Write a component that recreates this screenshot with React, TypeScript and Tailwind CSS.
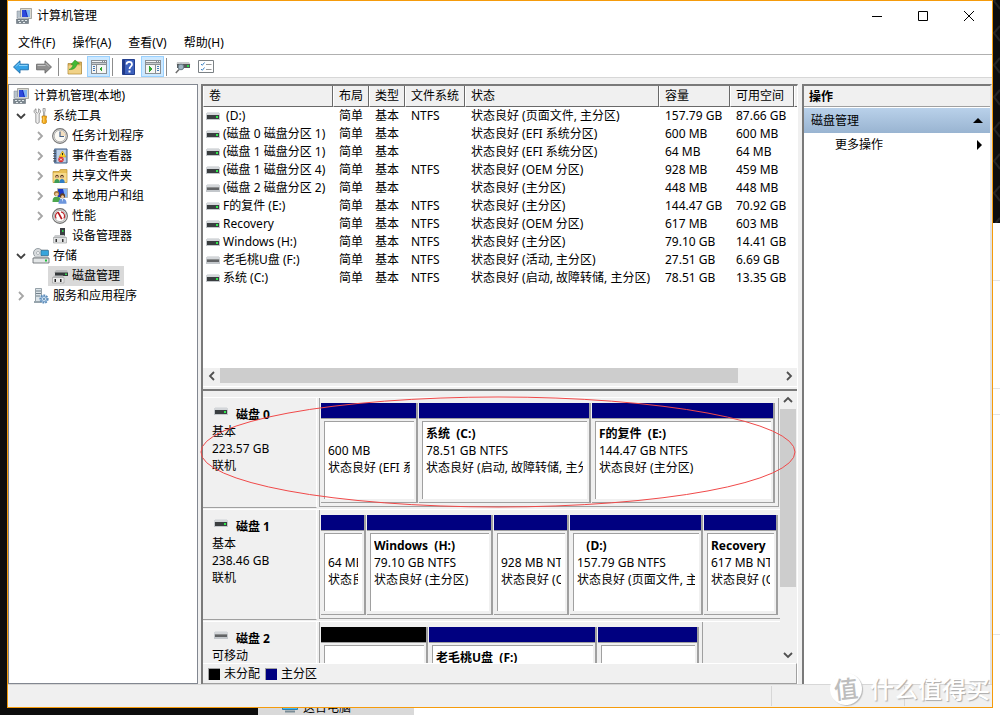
import type { ReactNode } from 'react';

interface Volume {
  name: string;
  removable?: boolean;
  fs: string;
  status: string;
  capacity: string;
  free: string;
}

interface Partition {
  width: string;
  name?: string;
  size?: string;
  status?: string;
  unallocated?: boolean;
}

interface Disk {
  name: string;
  kind: string;
  size?: string;
  state?: string;
  removable?: boolean;
  framed: boolean;
  partitions: Partition[];
}

const volumes: Volume[] = [
  { name: ' (D:)', fs: 'NTFS', status: '状态良好 (页面文件, 主分区)', capacity: '157.79 GB', free: '87.66 GB' },
  { name: '(磁盘 0 磁盘分区 1)', fs: '', status: '状态良好 (EFI 系统分区)', capacity: '600 MB', free: '600 MB' },
  { name: '(磁盘 1 磁盘分区 1)', fs: '', status: '状态良好 (EFI 系统分区)', capacity: '64 MB', free: '64 MB' },
  { name: '(磁盘 1 磁盘分区 4)', fs: 'NTFS', status: '状态良好 (OEM 分区)', capacity: '928 MB', free: '459 MB' },
  { name: '(磁盘 2 磁盘分区 2)', removable: true, fs: '', status: '状态良好 (主分区)', capacity: '448 MB', free: '448 MB' },
  { name: 'F的复件 (E:)', fs: 'NTFS', status: '状态良好 (主分区)', capacity: '144.47 GB', free: '70.92 GB' },
  { name: 'Recovery', fs: 'NTFS', status: '状态良好 (OEM 分区)', capacity: '617 MB', free: '603 MB' },
  { name: 'Windows (H:)', fs: 'NTFS', status: '状态良好 (主分区)', capacity: '79.10 GB', free: '14.41 GB' },
  { name: '老毛桃U盘 (F:)', removable: true, fs: 'NTFS', status: '状态良好 (活动, 主分区)', capacity: '27.51 GB', free: '6.69 GB' },
  { name: '系统 (C:)', fs: 'NTFS', status: '状态良好 (启动, 故障转储, 主分区)', capacity: '78.51 GB', free: '13.35 GB' },
];

const disks: Disk[] = [
  {
    name: '磁盘 0',
    kind: '基本',
    size: '223.57 GB',
    state: '联机',
    framed: true,
    partitions: [
      { width: 'w-[97px]', size: '600 MB', status: '状态良好 (EFI 系统分区)' },
      { width: 'w-[172px]', name: '系统  (C:)', size: '78.51 GB NTFS', status: '状态良好 (启动, 故障转储, 主分区)' },
      { width: 'w-[183px]', name: 'F的复件  (E:)', size: '144.47 GB NTFS', status: '状态良好 (主分区)' },
    ],
  },
  {
    name: '磁盘 1',
    kind: '基本',
    size: '238.46 GB',
    state: '联机',
    framed: false,
    partitions: [
      { width: 'w-[45px]', size: '64 MB', status: '状态良好 (EFI 系统分区)' },
      { width: 'w-[126px]', name: 'Windows  (H:)', size: '79.10 GB NTFS', status: '状态良好 (主分区)' },
      { width: 'w-[75px]', size: '928 MB NTFS', status: '状态良好 (OEM 分区)' },
      { width: 'w-[133px]', name: '   (D:)', size: '157.79 GB NTFS', status: '状态良好 (页面文件, 主分区)' },
      { width: 'w-[74px]', name: 'Recovery', size: '617 MB NTFS', status: '状态良好 (OEM 分区)' },
    ],
  },
  {
    name: '磁盘 2',
    kind: '可移动',
    removable: true,
    framed: true,
    partitions: [
      { width: 'w-[107px]', unallocated: true },
      { width: 'w-[168px]', name: '老毛桃U盘  (F:)' },
      { width: 'w-[101px]' },
    ],
  },
];

const columns = [
  { label: '卷', width: 'w-[130px]' },
  { label: '布局', width: 'w-9' },
  { label: '类型', width: 'w-9' },
  { label: '文件系统', width: 'w-[60px]' },
  { label: '状态', width: 'w-[194px]' },
  { label: '容量', width: 'w-[71px]' },
  { label: '可用空间', width: 'w-16' },
  { label: '', width: '' },
];

function ComputerIcon() {
  return (
    <svg width="16" height="16" viewBox="0 0 16 16">
      <path d="M4.500.5h11v10h-11z" fill="#d8d8d0" stroke="#8b8b85" strokeWidth=".7" />
      <path d="M6 2h8v7H6z" fill="#1525b8" />
      <path d="M10 2h4v7h-2z" fill="#7fb4f4" />
      <path d="M6 2h3l2 7H6z" fill="#2c49dc" />
      <path d="M1 3h3.500v7H1z" fill="#b7c2cb" stroke="#7c8790" strokeWidth=".5" />
      <path d="M2 9h10v2H2z" fill="#c9ced2" />
      <path d="M.5 11h12v4.500H.5z" fill="#7b868e" stroke="#59636c" strokeWidth=".5" />
      <path d="M2 12h2v1H2zM5.500 12h2v1h-2zM9 12h2v1H9zM3 14h2v1H3zM7 14h2v1H7z" fill="#e2e8eb" />
    </svg>
  );
}

function ToolsIcon() {
  return (
    <svg width="16" height="16" viewBox="0 0 16 16">
      <path d="M3 .8v3.400l1.300.9 1.300-.9V.8c1.600.7 2.200 2.100 1.800 3.500L6.200 6v8.500l-1.700 1-1.700-1V6L1.200 4.300C.8 2.900 1.400 1.500 3 .8z" fill="#ededed" stroke="#777" strokeWidth=".7" />
      <path d="M10 .5h2.200v2.500l-.5 1v4h-1.200v-4l-.5-1z" fill="#e5e5e5" stroke="#777" strokeWidth=".6" />
      <path d="M9 8h4.500v2l-.6 1 .6 1.200v2.300l-1 1h-2.500l-1-1v-2.300l.6-1.200-.6-1z" fill="#f0a514" stroke="#bb7706" strokeWidth=".6" />
      <path d="M10.300 8.500h1v6h-1z" fill="#ffdb75" />
    </svg>
  );
}

function ClockIcon() {
  return (
    <svg width="16" height="16" viewBox="0 0 16 16">
      <circle cx="8" cy="8" r="7.400" fill="#e4e4e2" stroke="#777" strokeWidth="1.100" />
      <circle cx="8" cy="8" r="5.800" fill="#fbf9f3" stroke="#a9a9a9" strokeWidth=".8" />
      <path d="M8 2.500a5.500 5.500 0 0 1 5.500 5.500H8z" fill="#f2dec0" />
      <path d="M8 3.500V8.500h4" fill="none" stroke="#47638a" strokeWidth="1.200" />
    </svg>
  );
}

function EventIcon() {
  return (
    <svg width="16" height="16" viewBox="0 0 16 16">
      <path d="M2.500 1h12.500v14H2.500z" fill="#a9c0dc" stroke="#3f5c84" />
      <path d="M5 3h8.500M5 5h8.500M5 7h8.500M5 9h8.500M5 11h8.500M5 13h8.500" stroke="#d9e6f4" strokeWidth=".9" />
      <path d="M2 1h2.500v14H2z" fill="#5d7ba2" />
      <path d="M1 3h3M1 5.500h3M1 8h3M1 10.500h3M1 13h3" stroke="#444" strokeWidth=".8" />
      <path d="M10.500 3l3.500 6H7z" fill="#ffd52e" stroke="#b7880a" strokeWidth=".5" />
      <path d="M10.500 5v2.200" stroke="#222" />
      <circle cx="9" cy="11.500" r="2.700" fill="#db2f2f" />
      <path d="M8 10.500l2 2M10 10.500l-2 2" stroke="#fff" strokeWidth=".9" />
    </svg>
  );
}

function SharedFolderIcon() {
  return (
    <svg width="16" height="16" viewBox="0 0 16 16">
      <path d="M1 3.500h6l1.500-2H15v13H1z" fill="#e8bf55" stroke="#b98f2c" strokeWidth=".7" />
      <path d="M1.500 5h13v9h-13z" fill="#f6da8c" />
      <circle cx="5" cy="8.500" r="1.700" fill="#634026" />
      <circle cx="5" cy="9" r="1" fill="#efc79c" />
      <path d="M2.300 15c0-3 1-4 2.700-4s2.700 1 2.700 4z" fill="#3d9b57" />
      <circle cx="10" cy="8.500" r="1.700" fill="#51341e" />
      <circle cx="10" cy="9" r="1" fill="#efc79c" />
      <path d="M7.500 15c0-3 .8-4 2.500-4s2.700 1 2.700 4z" fill="#307dc5" />
    </svg>
  );
}

function UsersIcon() {
  return (
    <svg width="16" height="16" viewBox="0 0 16 16">
      <path d="M5.500.5h10v9h-10z" fill="#1d39c4" stroke="#b5b5b0" />
      <path d="M11 1h4v8h-2z" fill="#82b2f0" />
      <circle cx="4.500" cy="5.500" r="2.600" fill="#a77a3c" />
      <circle cx="4.700" cy="6.300" r="1.600" fill="#efc79c" />
      <path d="M.5 14c0-4 1.300-5.300 4-5.300S9 10 9 14z" fill="#4ca64d" />
      <circle cx="10.500" cy="7.800" r="2.500" fill="#63401f" />
      <circle cx="10.500" cy="8.700" r="1.500" fill="#efc79c" />
      <path d="M6.500 15.800c0-3.500 1-5 4-5s4 1.500 4 5z" fill="#6d96dd" />
      <path d="M10 11l.5 3 .5-3z" fill="#fff" />
    </svg>
  );
}

function PerformanceIcon() {
  return (
    <svg width="16" height="16" viewBox="0 0 16 16">
      <circle cx="8" cy="8" r="7.400" fill="#e6e6e4" stroke="#707070" strokeWidth="1.100" />
      <circle cx="8" cy="8" r="5.600" fill="#fff" stroke="#9a9a9a" strokeWidth=".7" />
      <path d="M4.200 10.500A4.300 4.300 0 0 1 6 4.200M9 3.800a4.300 4.300 0 0 1 2.800 6.700" fill="none" stroke="#c0282d" strokeWidth="1.200" />
      <path d="M6 4.200l3.800 7" stroke="#b5161c" strokeWidth="1.700" />
    </svg>
  );
}

function DeviceIcon() {
  return (
    <svg width="16" height="16" viewBox="0 0 16 16">
      <path d="M8 0h5v8H8z" fill="#3c3f43" />
      <path d="M10 2h1.500v2H10z" fill="#2bd44d" />
      <path d="M3 7h9l3 3H1z" fill="#c8cacc" />
      <path d="M1.500 9.500h13V15h-13z" fill="#e2e3e4" stroke="#a1a3a5" strokeWidth=".7" />
      <path d="M3.500 11h1.500v3H3.500zM10 11h1.500v3H10z" fill="#333" />
    </svg>
  );
}

function StorageIcon() {
  return (
    <svg className="shrink-0" width="18" height="16" viewBox="0 0 18 16">
      <path d="M3 1h13v7H3z" fill="#d0d5d8" />
      <circle cx="6" cy="5" r="4.500" fill="#d9dcde" stroke="#7f898f" strokeWidth=".8" />
      <circle cx="6" cy="5" r="1.500" fill="#fff" stroke="#8a9398" strokeWidth=".6" />
      <path d="M9 2.500h7.500v5H9z" fill="#37a5dc" stroke="#276f97" strokeWidth=".7" />
      <path d="M3 8h13l1 2.500H1z" fill="#c4c8ca" />
      <path d="M1 10h16v5H1z" fill="#e3e6e7" stroke="#60666a" strokeWidth=".8" />
      <path d="M13 11.500h2v2h-2z" fill="#20bd3b" />
    </svg>
  );
}

function DiskManagementIcon() {
  return (
    <svg width="16" height="16" viewBox="0 0 16 16">
      <path d="M4 2h11l1 3H2z" fill="#b9bbbc" />
      <path d="M3 4.500h13v3.500H3z" fill="#34383a" />
      <path d="M13 5.500h2v1.500h-2z" fill="#38d853" />
      <path d="M2 7.500h9l1 2.500H0z" fill="#b8babb" />
      <path d="M.5 9.500h11.500V15H.5z" fill="#ececec" stroke="#a3a3a3" strokeWidth=".7" />
      <path d="M2.500 11h1.500v3H2.500zM8 11h1.500v3H8z" fill="#222" />
    </svg>
  );
}

function ServicesIcon() {
  return (
    <svg width="16" height="16" viewBox="0 0 16 16">
      <path d="M2.500.5h6v14h-6z" fill="#dce4e9" stroke="#7d8b94" strokeWidth=".8" />
      <path d="M3 3h5M3 5.500h5M3 8h4" stroke="#71808a" />
      <path d="M1 13h7v2H1z" fill="#98a5ad" />
      <circle cx="11" cy="11" r="3.800" fill="#b5d2ed" stroke="#5d8cb9" strokeWidth="1.600" strokeDasharray="1.800 1" />
      <circle cx="11" cy="11" r="2.500" fill="#d8e9f8" stroke="#5d8cb9" strokeWidth=".8" />
      <circle cx="11" cy="11" r=".9" fill="#47769f" />
    </svg>
  );
}

function DriveIcon({ removable = false }: { removable?: boolean }) {
  return (
    <svg className="shrink-0" width="14" height="8" viewBox="0 0 14 8" shapeRendering="crispEdges">
      <path d="M1 0h12v1H1z" fill="#dfe1e3" />
      <path d="M0 1h14v2H0z" fill="#d3d6d9" />
      <path d="M0 3h14v5H0z" fill="#c3c7cb" />
      {removable ? (
        <>
          <path d="M1 3h12v1H1z" fill="#8d8f90" />
          <path d="M1 4h12v2H1z" fill="#626466" />
        </>
      ) : (
        <>
          <path d="M1 3h12v4H1z" fill="#3a3e40" />
          <path d="M10 4h2v2h-2z" fill="#2fe84c" />
        </>
      )}
    </svg>
  );
}

function ArrowIcon({ forward = false }: { forward?: boolean }) {
  return (
    <svg width="16" height="14" viewBox="0 0 16 14">
      {forward ? (
        <path d="M15.500 7L9 .8v3.400H.6v5.600H9v3.400z" fill="#8f8f8f" stroke="#666" strokeWidth=".9" />
      ) : (
        <path d="M.5 7L7 .8v3.400h8.400v5.600H7v3.400z" fill="#35a2e6" stroke="#1c6ca8" strokeWidth=".9" />
      )}
      {forward ? (
        <path d="M1.500 5.500h8M9.500 3l3.500 3.500" stroke="#c5c5c5" />
      ) : (
        <path d="M6 5.500h8.500M6.500 3L3 6.500" stroke="#8ad3fb" />
      )}
    </svg>
  );
}

function FolderUpIcon() {
  return (
    <svg width="16" height="16" viewBox="0 0 16 16">
      <path d="M1 4.500h6l1.500-1.500H14.500v12H1z" fill="#dcb35a" stroke="#a8812e" strokeWidth=".7" />
      <path d="M1.500 6.500h12.500V14.500H1.500z" fill="#f0d288" />
      <path d="M2 10.500c2.500-1 3.800-2.500 4-5H4L8 1l4.500 3.800-2.700.4C9.500 8.500 6.500 11 2 10.500z" fill="#42ba36" stroke="#23861c" strokeWidth=".5" />
    </svg>
  );
}

function PaneIcon({ right = false }: { right?: boolean }) {
  return (
    <svg width="16" height="14" viewBox="0 0 16 14" shapeRendering="crispEdges">
      <path d="M0 0h16v14H0z" fill="#8a8f94" />
      <path d="M1 1h10v1H1zM12 1h1v1h-1zM14 1h1v1h-1z" fill="#f4f4f4" />
      <path d="M1 3h14v1H1z" fill="#c5c9cc" />
      <path d={right ? 'M1 5h9v8H1zM11 5h4v8h-4z' : 'M1 5h4v8H1zM6 5h9v8H6z'} fill="#f6f6f4" />
      <path d={right ? 'M12 6h2v1h-2zM12 8h2v1h-2zM12 10h2v1h-2z' : 'M2 6h2v1H2zM2 8h2v1H2zM2 10h2v1H2z'} fill="#4077b8" />
      <path d={right ? 'M4 6l4 3-4 3z' : 'M11 6L8 9l3 3z'} fill="#31a52d" />
    </svg>
  );
}

function HelpIcon() {
  return (
    <svg width="13" height="16" viewBox="0 0 13 16">
      <path d="M.5.5h12v15H.5z" fill="#3c60bc" stroke="#233f8e" />
      <path d="M1 1h2v14H1z" fill="#203987" />
      <path d="M4.500 5.500C4.500 2 10 2 10 5.500c0 2-2.500 2-2.500 4.500" fill="none" stroke="#fff" strokeWidth="1.700" />
      <path d="M6.500 11.500h2v2h-2z" fill="#fff" />
    </svg>
  );
}

function RescanIcon() {
  return (
    <svg width="16" height="14" viewBox="0 0 16 14">
      <path d="M2 2h12l1.500 2.500h-14z" fill="#c7c9ca" />
      <path d="M2 4h13v4H2z" fill="#55595b" />
      <path d="M12 5h2v2h-2z" fill="#2bd84a" />
      <circle cx="6" cy="7" r="2.800" fill="#9fb4c2" stroke="#697c88" />
      <path d="M4 9.500L.8 13" stroke="#6e6e6e" strokeWidth="1.500" />
    </svg>
  );
}

function ChecklistIcon() {
  return (
    <svg width="16" height="13" viewBox="0 0 16 13">
      <path d="M.5.5h15v12H.5z" fill="#fff" stroke="#7b8185" />
      <path d="M3 4l1.300 1.300L6.500 2.500M3 9l1.300 1.300L6.500 7.500" fill="none" stroke="#3c83c7" />
      <path d="M8 4.500h5.500M8 9.500h5.500" stroke="#999" />
    </svg>
  );
}

function Chevron({ dir, className = 'text-[#505050]' }: { dir: 'up' | 'down' | 'left' | 'right'; className?: string }) {
  const paths = {
    up: 'M1 7l4-4 4 4',
    down: 'M1 3l4 4 4-4',
    left: 'M7 1L3 5l4 4',
    right: 'M3 1l4 4-4 4',
  };
  return (
    <svg className={`shrink-0 ${className}`} width="10" height="10" viewBox="0 0 10 10">
      <path d={paths[dir]} fill="none" stroke="currentColor" strokeWidth="1.800" />
    </svg>
  );
}

interface TreeItemProps {
  label: string;
  icon: ReactNode;
  indent: string;
  state?: 'open' | 'closed' | 'leaf';
  selected?: boolean;
  children?: ReactNode;
}

function TreeItem({ label, icon, indent, state = 'leaf', selected, children }: TreeItemProps) {
  return (
    <li>
      <button className={`flex h-5 w-full items-center ${indent}`}>
        <span className="flex w-4 shrink-0 justify-center">
          {state === 'open' && <Chevron dir="down" className="text-[#404040]" />}
          {state === 'closed' && <Chevron dir="right" className="text-[#a6a6a6]" />}
        </span>
        <span className={`flex h-5 items-center gap-1 px-1 ${selected ? 'bg-[#d9d9d9]' : ''}`}>
          <span className="flex w-4 shrink-0 justify-center">{icon}</span>
          <span className="whitespace-nowrap">{label}</span>
        </span>
      </button>
      {children && <ul>{children}</ul>}
    </li>
  );
}

function Tree() {
  return (
    <nav className="w-[190px] shrink-0 border border-[#828790] bg-white pt-px">
      <button className="flex h-5 items-center gap-[5px] pl-1">
        <ComputerIcon />
        计算机管理(本地)
      </button>
      <ul>
        <TreeItem label="系统工具" icon={<ToolsIcon />} indent="pl-1" state="open">
          <TreeItem label="任务计划程序" icon={<ClockIcon />} indent="pl-[23px]" state="closed" />
          <TreeItem label="事件查看器" icon={<EventIcon />} indent="pl-[23px]" state="closed" />
          <TreeItem label="共享文件夹" icon={<SharedFolderIcon />} indent="pl-[23px]" state="closed" />
          <TreeItem label="本地用户和组" icon={<UsersIcon />} indent="pl-[23px]" state="closed" />
          <TreeItem label="性能" icon={<PerformanceIcon />} indent="pl-[23px]" state="closed" />
          <TreeItem label="设备管理器" icon={<DeviceIcon />} indent="pl-[23px]" />
        </TreeItem>
        <TreeItem label="存储" icon={<StorageIcon />} indent="pl-1" state="open">
          <TreeItem label="磁盘管理" icon={<DiskManagementIcon />} indent="pl-[23px]" selected />
        </TreeItem>
        <TreeItem label="服务和应用程序" icon={<ServicesIcon />} indent="pl-1" state="closed" />
      </ul>
    </nav>
  );
}

function VolumeList() {
  return (
    <section className="flex h-[305px] shrink-0 flex-col">
      <div className="min-h-0 flex-1 overflow-hidden bg-white">
        <table className="w-full table-fixed border-separate border-spacing-0 text-left">
          <thead>
            <tr>
              {columns.map((col) => (
                <th
                  key={col.label}
                  className={`h-[21px] border-b border-l border-b-[#696969] border-l-white bg-[#f0f0f0] p-0 font-normal ${col.width}`}
                >
                  <div className="h-5 overflow-hidden border-r border-[#696969] pl-[5px] leading-5 whitespace-nowrap">
                    {col.label}
                  </div>
                </th>
              ))}
            </tr>
          </thead>
          <tbody>
            {volumes.map((v) => (
              <tr key={v.name} className="h-[18px] whitespace-pre">
                <td className="p-0 pl-[3px]">
                  <span className="flex items-center gap-[3px] leading-[18px]">
                    <DriveIcon removable={v.removable} />
                    {v.name}
                  </span>
                </td>
                <td className="p-0 pl-1.5 leading-[18px]">简单</td>
                <td className="p-0 pl-1.5 leading-[18px]">基本</td>
                <td className="p-0 pl-1.5 leading-[18px]">{v.fs}</td>
                <td className="p-0 pl-1.5 leading-[18px]">{v.status}</td>
                <td className="p-0 pl-1.5 leading-[18px]">{v.capacity}</td>
                <td className="p-0 pl-1.5 leading-[18px]">{v.free}</td>
                <td className="p-0" />
              </tr>
            ))}
          </tbody>
        </table>
      </div>
      <div className="flex h-[15px] shrink-0 bg-[#f0f0f0]">
        <button aria-label="向左滚动" className="flex w-[17px] items-center justify-center">
          <Chevron dir="left" />
        </button>
        <div className="flex-1">
          <div className="h-full w-[92.5%] bg-[#cdcdcd]" />
        </div>
        <button aria-label="向右滚动" className="flex w-[17px] items-center justify-center">
          <Chevron dir="right" />
        </button>
      </div>
      <div className="h-2 shrink-0 border-b-2 border-[#7a7a7a] bg-[#f0f0f0] pt-[3px]">
        <div className="h-px bg-white" />
      </div>
    </section>
  );
}

function PartitionCell({ partition }: { partition: Partition }) {
  return (
    <div className={`flex shrink-0 flex-col border-r-2 border-b border-[#a0a0a0] ${partition.width}`}>
      <div className={`h-[15px] shrink-0 ${partition.unallocated ? 'bg-black' : 'bg-[#000080]'}`} />
      <div className="h-px shrink-0 bg-[#a0a0a0]" />
      <div className="mx-[2px] mt-[2px] mb-[3px] ml-[3px] min-h-0 flex-1 border-t border-l border-[#a0a0a0] bg-white pt-[3px] pr-1 pl-[3px]">
        <div className="leading-[17px] whitespace-pre">
          <p className="h-[17px] overflow-hidden font-bold">{partition.name}</p>
          <p className="overflow-hidden">{partition.size}</p>
          <p className="overflow-hidden">{partition.status}</p>
        </div>
      </div>
    </div>
  );
}

function DiskRow({ disk }: { disk: Disk }) {
  return (
    <div className="flex h-28 shrink-0 border-t border-white">
      <div className="mb-px w-[114px] shrink-0 border-r border-b border-r-white border-b-[#a0a0a0] pt-2 pl-[9px] leading-[17px]">
        <div className="flex gap-2 font-bold">
          <span className="pt-px pl-[2px]">
            <DriveIcon removable={disk.removable} />
          </span>
          {disk.name}
        </div>
        <p>{disk.kind}</p>
        <p>{disk.size}</p>
        <p>{disk.state}</p>
      </div>
      <div className="min-w-0 flex-1 pl-[2px]">
        <div
          className={`flex h-[109px] gap-px border-b border-l border-[#a0a0a0] pt-[5px] pb-[3px] pl-px ${
            disk.framed ? 'w-fit border-r pr-[3px]' : 'w-full overflow-hidden'
          }`}
        >
          {disk.partitions.map((p, i) => (
            <PartitionCell key={i} partition={p} />
          ))}
        </div>
      </div>
    </div>
  );
}

function DiskMap() {
  return (
    <section className="relative flex min-h-0 flex-1 flex-col">
      <div className="flex min-h-0 flex-1">
        <div className="flex min-w-0 flex-1 flex-col overflow-hidden pt-1.5">
          {disks.map((disk) => (
            <DiskRow key={disk.name} disk={disk} />
          ))}
        </div>
        <div className="flex w-[17px] shrink-0 flex-col pr-px">
          <button aria-label="向上滚动" className="flex h-[18px] items-center justify-center">
            <Chevron dir="up" />
          </button>
          <div className="min-h-0 flex-1">
            <div className="h-3/4 bg-[#cdcdcd]" />
          </div>
          <button aria-label="向下滚动" className="flex h-[17px] items-center justify-center">
            <Chevron dir="down" />
          </button>
        </div>
      </div>
      <div className="flex h-[21px] shrink-0 items-center gap-1 border-t border-r border-b border-t-white border-r-[#a0a0a0] border-b-[#a0a0a0] pl-[5px]">
        <span className="size-3 border-t border-l border-[#a0a0a0] bg-black" />
        <span>未分配</span>
        <span className="ml-px size-3 border-t border-l border-[#a0a0a0] bg-[#000080]" />
        <span>主分区</span>
      </div>
      <svg
        className="pointer-events-none absolute top-1 -left-[2px] h-[114px] w-full overflow-visible"
        viewBox="0 0 596 114"
        preserveAspectRatio="none"
      >
        <ellipse cx="298" cy="57" rx="298" ry="55" fill="none" stroke="#f04848" />
      </svg>
    </section>
  );
}

function ActionsPane() {
  return (
    <aside className="w-[190px] shrink-0 border-t-2 border-r-2 border-l-2 border-t-[#7a7a7a] border-r-[#e3e3e3] border-l-[#7a7a7a] bg-white">
      <h2 className="h-[21px] border-b border-[#a0a0a0] bg-[#f0f0f0] pl-[5px] leading-[21px] font-bold">操作</h2>
      <button className="mt-px flex h-[25px] w-full items-center justify-between bg-linear-to-b from-[#b9d1ea] to-[#99b4d1] pr-[7px] pl-[7px]">
        磁盘管理
        <svg width="10" height="5" viewBox="0 0 10 5">
          <path d="M5 0l5 5H0z" />
        </svg>
      </button>
      <button className="flex h-6 w-full items-center justify-between pr-2 pl-[31px]">
        更多操作
        <svg width="5" height="10" viewBox="0 0 5 10">
          <path d="M0 0l5 5-5 5z" />
        </svg>
      </button>
    </aside>
  );
}

function Separator() {
  return <span className="h-[18px] w-px bg-[#8c8c8c]" />;
}

function Toolbar() {
  return (
    <div className="flex h-[23px] shrink-0 items-center border-b border-[#d7d7d7] pt-px pl-[5px]">
      <button aria-label="后退"><ArrowIcon /></button>
      <button aria-label="前进" className="mr-1.5 ml-[7px]"><ArrowIcon forward /></button>
      <Separator />
      <button aria-label="上移一级" className="mr-1 ml-2"><FolderUpIcon /></button>
      <button aria-label="显示/隐藏控制台树" className="mr-[2px] flex h-[21px] w-[23px] items-center justify-center border border-[#99d1ff] bg-[#cce8ff]">
        <PaneIcon />
      </button>
      <Separator />
      <button aria-label="帮助" className="mr-1.5 ml-[9px]"><HelpIcon /></button>
      <button aria-label="显示/隐藏操作窗格" className="mr-[2px] flex h-[21px] w-[23px] items-center justify-center border border-[#99d1ff] bg-[#cce8ff]">
        <PaneIcon right />
      </button>
      <Separator />
      <button aria-label="重新扫描" className="mr-[7px] ml-2"><RescanIcon /></button>
      <button aria-label="属性"><ChecklistIcon /></button>
    </div>
  );
}

function TitleBar() {
  return (
    <header className="flex h-[29px] shrink-0 items-center pl-2">
      <ComputerIcon />
      <h1 className="ml-[5px] flex-1">计算机管理</h1>
      <button aria-label="最小化" className="flex h-full w-[46px] items-center justify-center">
        <svg width="10" height="10" viewBox="0 0 10 10"><path d="M0 5.500h10" stroke="#000" /></svg>
      </button>
      <button aria-label="最大化" className="flex h-full w-[46px] items-center justify-center">
        <svg width="10" height="10" viewBox="0 0 10 10"><path d="M.5.5h9v9h-9z" fill="none" stroke="#000" /></svg>
      </button>
      <button aria-label="关闭" className="flex h-full w-[46px] items-center justify-center">
        <svg width="10" height="10" viewBox="0 0 10 10"><path d="M0 0l10 10M10 0L0 10" stroke="#000" /></svg>
      </button>
    </header>
  );
}

function Watermark() {
  return (
    <div className="pointer-events-none absolute right-[2px] bottom-0 flex h-9 items-center gap-2 whitespace-nowrap">
      <span className="flex size-8 -rotate-6 items-center justify-center rounded-full bg-white text-2xl font-medium text-[#bdbdbd] shadow-[1px_1px_1px_#bbb]">
        值
      </span>
      <span className="text-2xl font-medium text-white [text-shadow:1px_1px_1px_#aaa]">什么值得买</span>
    </div>
  );
}

export default function App() {
  return (
    <div className="flex h-screen flex-col overflow-hidden bg-white font-['Noto_Sans','Noto_Sans_CJK_SC',sans-serif] text-xs text-black">
      <div className="flex min-h-0 flex-1">
        <div className="w-[7px] shrink-0 bg-[#0d0d0d]" />
        <main className="relative flex min-w-0 flex-1 flex-col border border-[#f59b0b] bg-white">
          <TitleBar />
          <div className="flex h-[25px] shrink-0 items-center gap-[17px] border-b border-[#b0b0b0] pt-[2px] pl-[10px]">
            <button>文件(F)</button>
            <button>操作(A)</button>
            <button>查看(V)</button>
            <button>帮助(H)</button>
          </div>
          <Toolbar />
          <div className="flex min-h-0 flex-1 bg-[#f0f0f0] pt-1.5">
            <Tree />
            <div className="ml-[3px] flex min-w-0 flex-1 flex-col border-t-2 border-r border-l-2 border-t-[#7a7a7a] border-r-white border-l-[#7a7a7a]">
              <VolumeList />
              <DiskMap />
            </div>
            <div className="w-1 shrink-0" />
            <ActionsPane />
          </div>
          <footer className="flex h-[23px] shrink-0 justify-end border-t border-[#d7d7d7] bg-[#f0f0f0] py-px">
            <span className="w-[133px] border-l border-[#d7d7d7]" />
            <span className="w-[88px] border-l border-[#d7d7d7]" />
          </footer>
          <Watermark />
        </main>
        <div className="flex w-[7px] shrink-0 flex-col">
          <svg className="h-[223px] w-full shrink-0 bg-[#0d0d0d]">
            <defs>
              <pattern id="weave" width="7" height="32" patternUnits="userSpaceOnUse">
                <path d="M7-6L1 1l6 8M7 26L1 33l6 8" fill="none" stroke="#242424" strokeWidth="2" />
              </pattern>
            </defs>
            <rect width="100%" height="100%" fill="url(#weave)" />
          </svg>
          <div className="h-[58px] shrink-0 border-b border-[#e5e5e5]" />
          <div className="h-[108px] shrink-0 border-b border-[#e5e5e5]" />
          <div className="h-[26px] shrink-0 border-b border-[#e5e5e5]" />
          <div className="h-[220px] shrink-0 border-b border-[#e5e5e5]" />
        </div>
      </div>
      <div className="flex h-[7px] shrink-0 items-end overflow-hidden leading-[14px]">
        <span className="h-full w-[258px] shrink-0 bg-[#0d0d0d]" />
        <span className="flex h-full w-[156px] shrink-0 items-end gap-[5px] bg-[#d9d9d9] pl-6">
          <svg className="mb-[2px]" width="16" height="14" viewBox="0 0 16 14">
            <path d="M.5.5h15v10H.5z" fill="#45b7f0" stroke="#2c7fae" />
            <path d="M3 12.500h10" stroke="#7a8c96" strokeWidth="2" />
          </svg>
          这台电脑
        </span>
      </div>
    </div>
  );
}
